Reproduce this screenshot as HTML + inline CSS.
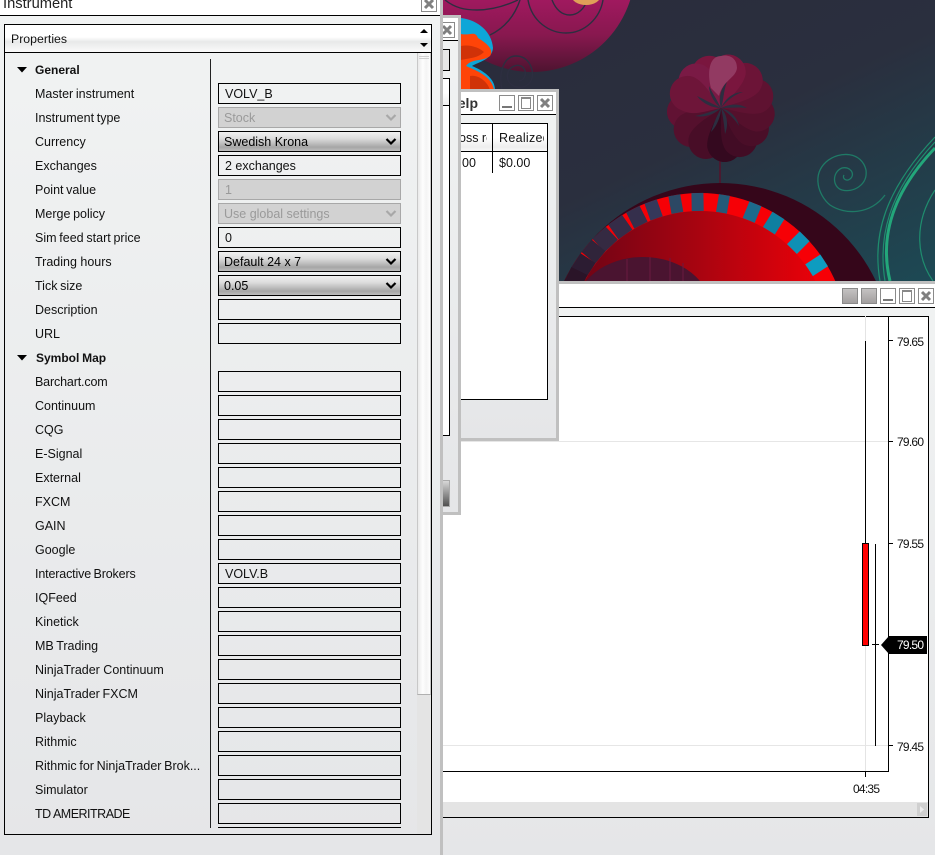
<!DOCTYPE html>
<html><head><meta charset="utf-8"><title>Instrument</title>
<style>
html,body{margin:0;padding:0;background:#2a2d3d}
body{width:935px;height:855px;position:relative;overflow:hidden;font-family:"Liberation Sans",sans-serif;font-size:12.5px;color:#111}
div{position:absolute;box-sizing:border-box}
.l{left:35px;height:16px;line-height:16px;white-space:nowrap;word-spacing:-.8px}
.h{font-weight:bold;font-size:12px;word-spacing:-.6px}
.i{left:218px;width:183px;height:21px;border:1px solid #000;padding-left:6px;padding-top:1px;line-height:19px;white-space:nowrap}
.d{border-color:#a8a8a8;background:#d2d2d2;color:#9a9a9a;padding-left:5px}
.s{background:linear-gradient(#f0f0f0 0,#dcdcdc 35%,#a6a6a6 80%,#bdbdbd 100%);color:#000;padding-left:5px}
.v{position:absolute;right:3px;top:5px;width:12px;height:9px}
.b{width:16px;height:16px;border:1px solid #8a8a8a;background:#fff}
.g{width:16px;height:16px;border:1px solid #8a8a8a;background:linear-gradient(#c4c2c2,#a29f9f)}
.t{left:897px;height:14px;line-height:14px;font-size:12px;letter-spacing:-.75px;color:#111}
.k{background:#000}
</style></head><body>

<svg style="position:absolute;left:0;top:0" width="935" height="855" viewBox="0 0 935 855">
<defs>
<linearGradient id="bg" x1="0.2" y1="0" x2="1" y2="1"><stop offset="0" stop-color="#2a2c3c"/><stop offset=".45" stop-color="#2a2f3e"/><stop offset="1" stop-color="#1c4a55"/></linearGradient>
<linearGradient id="mag" x1="0" y1="0" x2="0" y2="1"><stop offset="0" stop-color="#a3195f"/><stop offset=".65" stop-color="#a0195f"/><stop offset=".82" stop-color="#88184f"/><stop offset="1" stop-color="#4e1430"/></linearGradient>
<linearGradient id="red" x1="0" y1="0" x2="1" y2="0"><stop offset="0" stop-color="#6a0416"/><stop offset=".5" stop-color="#a90410"/><stop offset="1" stop-color="#f00008"/></linearGradient>
<path id="p" d="M0 0C-8 -12 -20 -22 -19 -37A18.500 18.500 0 0 1 18 -40C18 -26 6 -12 0 0Z"/>
</defs>
<rect x="440" y="0" width="495" height="290" fill="url(#bg)"/>
<circle cx="532" cy="-31" r="103" fill="url(#mag)"/>
<g fill="none" stroke="#2d2e40" stroke-width="1.4">
<path d="M445 0C455 8 465 10 477 10C490 10 505 6 518 0"/>
<path d="M490 35C505 28 515 15 520 0"/>
<path d="M528 0C532 22 550 33 566 33C585 33 600 18 603 0"/>
<path d="M552 0C556 10 562 15 570 15C578 15 585 8 587 0"/>
<path d="M502 90C498 70 505 56 516 56C528 56 534 68 532 78C529 90 512 90 508 80C505 70 514 63 521 66C528 70 526 80 519 81"/>
</g>
<ellipse cx="586" cy="-5" rx="15" ry="10" fill="#e0a058"/>
<!-- blob -->
<path d="M461 18C478 20 492 32 493 48C492 60 478 62 472 66C482 70 495 78 495 90H461Z" fill="#0da6d8"/>
<path d="M461 34C470 36 475 30 478 38C488 44 494 50 490 56C482 62 472 58 466 66C475 70 492 76 494 90H461Z" fill="#ff4408"/>
<path d="M461 46C470 44 480 48 484 52C478 58 470 58 461 60ZM470 76C478 74 488 82 490 90H470Z" fill="#d03208"/>
<!-- flower -->
<rect x="719" y="160" width="2" height="24" fill="#4a1a30"/>
<g transform="translate(721 108)">
<g transform="scale(.95)">
<use href="#p" fill="#611233" transform="rotate(-95)"/>
<use href="#p" fill="#55102d" transform="rotate(-125)"/>
<use href="#p" fill="#480d27" transform="rotate(-155)"/>
<use href="#p" fill="#34091f" transform="rotate(175)"/>
<use href="#p" fill="#420c25" transform="rotate(150)"/>
<use href="#p" fill="#4a0e28" transform="rotate(125)"/>
<use href="#p" fill="#55102c" transform="rotate(100)"/>
<use href="#p" fill="#5f1231" transform="rotate(72)"/>
<use href="#p" fill="#6c1437" transform="rotate(42)"/>
<use href="#p" fill="#7a163e" transform="rotate(12)"/>
<use href="#p" fill="#7a163e" transform="rotate(-18)"/>
<use href="#p" fill="#7a1a45" transform="rotate(-42)"/>
<use href="#p" fill="#6e1539" transform="rotate(-66)"/>
</g>
<path d="M-10 -20C-14 -35 -12 -52 0 -52C8 -54 16 -50 16 -40C15 -30 2 -28 -2 -12Z" fill="#923a62"/>
<g fill="#2c2e40">
<path d="M0 0C-3 -10 0 -20 6 -26C2 -16 3 -8 0 0Z"/><path d="M0 0C4 -9 12 -16 22 -16C12 -13 6 -7 0 0Z"/>
<path d="M0 0C8 -4 18 -5 26 0C16 -1 8 0 0 0Z"/><path d="M0 0C8 2 16 8 18 18C13 10 7 5 0 0Z"/>
<path d="M0 0C6 6 8 16 4 26C3 16 2 8 0 0Z"/><path d="M0 0C0 8 -4 18 -10 24C-7 14 -4 8 0 0Z"/>
<path d="M0 0C-6 6 -16 10 -26 8C-16 6 -8 3 0 0Z"/><path d="M0 0C-8 0 -18 -4 -24 -12C-14 -7 -8 -4 0 0Z"/>
<path d="M0 0C-6 -4 -12 -14 -12 -22C-8 -14 -4 -8 0 0Z"/>
</g>
</g>
<!-- dome -->
<circle cx="720" cy="356" r="173" fill="#35061a"/>
<circle cx="700" cy="341" r="148" fill="#f60006"/>
<g transform="translate(700 341)">
<rect x="-7" y="-148" width="14" height="18" fill="#0e9cc0" transform="rotate(57)"/>
<rect x="-7" y="-148" width="14" height="18" fill="#0e90b5" transform="rotate(45)"/>
<rect x="-7" y="-148" width="14" height="18" fill="#0f7fa0" transform="rotate(32)"/>
<rect x="-6.500" y="-148" width="13" height="18" fill="#1c6a8c" transform="rotate(22)"/>
<rect x="-5.500" y="-148" width="11" height="18" fill="#245a78" transform="rotate(9.500)"/>
<rect x="-6" y="-148" width="12" height="18" fill="#2a5070" transform="rotate(-1)"/>
<rect x="-6" y="-148" width="12" height="18" fill="#2c4864" transform="rotate(-10)"/>
<rect x="-6.500" y="-148" width="13" height="18" fill="#35385a" transform="rotate(-19.500)"/>
<rect x="-7.500" y="-148" width="15" height="18" fill="#352f4c" transform="rotate(-27)"/>
<rect x="-8.500" y="-148" width="17" height="18" fill="#352c48" transform="rotate(-35)"/>
<rect x="-9" y="-148" width="18" height="18" fill="#352a42" transform="rotate(-43)"/>
<rect x="-8" y="-148" width="16" height="18" fill="#30243a" transform="rotate(-50)"/>
<rect x="-8.500" y="-148" width="17" height="18" fill="#2c1c32" transform="rotate(-57)"/>
<rect x="-10" y="-148" width="20" height="18" fill="#2a1428" transform="rotate(-64)"/>
</g>
<circle cx="700" cy="341" r="130" fill="url(#red)"/>
<ellipse cx="643" cy="310" rx="68" ry="53" fill="#4a1430"/>
<path d="M627 259v22M650 257v24M670 258v23M683 263v18" stroke="#6a1a40" stroke-width="1"/>
<!-- green spirals -->
<g fill="none" stroke="#1f7a66" stroke-width="1.3">
<path d="M885 195C870 215 845 215 830 205C818 195 812 175 826 162C840 150 862 152 866 170C868 185 853 193 842 190C832 187 832 172 842 168C850 166 856 174 850 179C846 182 842 178 844 175"/>
</g>
<g fill="none" stroke="#23a67a" stroke-width="3"><path d="M890 281C880 240 890 195 935 148"/></g>
<g fill="none" stroke="#1f8d6e" stroke-width="1.200"><path d="M880 281C872 235 885 190 935 137"/><path d="M885 281C878 238 888 192 935 142"/><path d="M933 281C918 260 912 225 935 190"/></g>
</svg>

<!-- chart window -->
<div style="left:443px;top:281px;width:492px;height:574px;background:linear-gradient(#f1f3f3 0,#e5e6e8 100%)">
  <div style="left:116px;top:0;right:0;height:3px;background:#c0c0c0"></div>
  <div style="left:0;top:3px;right:0;height:23px;background:#fff"></div>
  <div class="k" style="left:0;top:26px;right:0;height:1px"></div>
  <div style="left:0;top:35px;width:486px;height:486px;background:#fff"></div>
  <div class="k" style="left:0;top:35px;width:486px;height:1px"></div>
  <div class="k" style="left:485px;top:35px;width:1px;height:501px"></div>
  <div class="k" style="left:445px;top:35px;width:1px;height:455px"></div>
  <div class="k" style="left:0;top:490px;width:446px;height:1px"></div>
  <div style="left:0;top:160px;width:445px;height:1px;background:#e6e6e6"></div>
  <div style="left:0;top:464px;width:445px;height:1px;background:#e6e6e6"></div>
  <div style="left:422px;top:35px;width:1px;height:455px;background:#e4e4e4"></div>
  <div style="left:0;top:521px;width:485px;height:15px;background:#e4e4e4"></div>
  <div class="k" style="left:0;top:536px;width:486px;height:1px"></div>
  <div style="left:474px;top:522px;width:10px;height:13px;background:#d0d0d0"><svg width="10" height="13" style="display:block"><path d="M3 3l4 3.500-4 3.500z" fill="#eee"/></svg></div>
</div>
<div class="k" style="left:865px;top:341px;width:1px;height:202px"></div>
<div class="k" style="left:862px;top:543px;width:7px;height:103px"></div>
<div style="left:863px;top:544px;width:5px;height:101px;background:#f00"></div>
<div class="k" style="left:875px;top:544px;width:1px;height:202px"></div>
<div class="k" style="left:872px;top:644px;width:7px;height:1px"></div>
<div class="k" style="left:888px;top:340px;width:5px;height:1px"></div>
<div class="k" style="left:888px;top:441px;width:5px;height:1px"></div>
<div class="k" style="left:888px;top:543px;width:5px;height:1px"></div>
<div class="k" style="left:888px;top:745px;width:5px;height:1px"></div>
<div class="k" style="left:865px;top:771px;width:1px;height:6px"></div>
<div class="t" style="top:335px">79.65</div>
<div class="t" style="top:435px">79.60</div>
<div class="t" style="top:537px">79.55</div>
<div class="t" style="top:740px">79.45</div>
<svg style="position:absolute;left:881px;top:636px" width="46" height="18"><path d="M0 9L8 0H46V18H8Z" fill="#000"/></svg>
<div class="t" style="top:638px;color:#fff">79.50</div>
<div class="t" style="left:853px;top:782px">04:35</div>
<div class="g" style="left:842px;top:288px"></div>
<div class="g" style="left:861px;top:288px"></div>
<div class="b" style="left:880px;top:288px"><div style="left:2px;top:10px;width:10px;height:2px;background:#777"></div></div>
<div class="b" style="left:899px;top:288px"><div style="left:2px;top:1px;width:10px;height:12px;border:1px solid #888;border-top-width:2px"></div></div>
<div class="b" style="left:918px;top:288px"><svg width="14" height="14" style="display:block"><path d="M3 3l8 8M11 3l-8 8" stroke="#808080" stroke-width="3"/></svg></div>

<!-- window 3 -->
<div style="left:461px;top:89px;width:98px;height:352px;background:linear-gradient(#f1f3f3,#e5e6e8);border:3px solid #c0c0c0;border-left:0">
  <div style="left:0;top:0;right:0;height:22px;background:#fff"></div>
  <div class="k" style="left:0;top:22px;right:0;height:1px"></div>
  <div style="left:0;top:31px;width:87px;height:277px;background:#fff;border:1px solid #000;border-left:0"></div>
  <div style="left:0;top:32px;width:86px;height:27px;background:linear-gradient(#fff 0,#fff 50%,#eee 85%,#f8f8f8 100%)"></div>
  <div class="k" style="left:0;top:59px;width:86px;height:1px"></div>
  <div class="k" style="left:31px;top:31px;width:1px;height:50px"></div>
  <div style="left:0;top:3px;height:16px;line-height:16px;font-weight:bold;font-size:14px;color:#333;width:17px;overflow:hidden;direction:rtl">elp</div>
  <div style="left:38px;top:38px;height:16px;line-height:16px;white-space:nowrap;width:45px;overflow:hidden;letter-spacing:.3px">Realized</div>
  <div style="left:0;top:38px;height:16px;line-height:16px;white-space:nowrap;width:26px;overflow:hidden;text-indent:-2px">oss re</div>
  <div style="left:1px;top:63px;height:16px;line-height:16px">00</div>
  <div style="left:38px;top:63px;height:16px;line-height:16px">$0.00</div>
</div>
<div class="b" style="left:499px;top:95px"><div style="left:2px;top:10px;width:10px;height:2px;background:#777"></div></div>
<div class="b" style="left:518px;top:95px"><div style="left:2px;top:1px;width:10px;height:12px;border:1px solid #888;border-top-width:2px"></div></div>
<div class="b" style="left:537px;top:95px"><svg width="14" height="14" style="display:block"><path d="M3 3l8 8M11 3l-8 8" stroke="#808080" stroke-width="3"/></svg></div>

<!-- window 2 -->
<div style="left:443px;top:15px;width:18px;height:500px;background:linear-gradient(#f1f3f3,#e5e6e8);border:3px solid #c0c0c0;border-left:0;border-bottom-width:3px">
  <div style="left:0;top:0;right:0;height:22px;background:#fff"></div>
  <div class="k" style="left:0;top:22px;width:15px;height:1px"></div>
  <div style="left:0;top:31px;width:7px;height:22px;border:1px solid #000;border-left:0;background:#e6e7e7"></div>
  <div style="left:0;top:60px;width:7px;height:358px;border:1px solid #000;border-left:0;background:#fff"></div>
  <div style="left:0;top:61px;width:6px;height:27px;background:linear-gradient(#fff 50%,#eee 100%)"></div>
  <div class="k" style="left:0;top:87px;width:6px;height:1px"></div>
  <div style="left:0;top:462px;width:7px;height:27px;background:linear-gradient(#d8d8d8,#505050);border:1px solid #aaa;border-left:0"></div>
</div>
<div class="b" style="left:439px;top:22px;height:16px"><svg width="14" height="14" style="display:block"><path d="M3 3l8 8M11 3l-8 8" stroke="#808080" stroke-width="3"/></svg></div>

<!-- instrument window -->
<div style="left:0;top:0;width:443px;height:855px;background:linear-gradient(#f1f3f3,#e5e6e8);border-right:3px solid #c0c0c0">
  <div style="left:0;top:0;width:440px;height:15px;background:#fff"></div>
  <div class="k" style="left:0;top:15px;width:440px;height:1px"></div>
  <div style="left:3px;top:-4px;font-size:14.700px;line-height:16px;color:#222">Instrument</div>
  <div class="b" style="left:421px;top:-4px"><svg width="14" height="14" style="display:block"><path d="M3 3l8 8M11 3l-8 8" stroke="#808080" stroke-width="3"/></svg></div>
  <div style="left:4px;top:24px;width:428px;height:811px;border:1px solid #000"></div>
  <div style="left:5px;top:25px;width:426px;height:27px;background:linear-gradient(#fff 0,#fff 45%,#e8e9e9 62%,#fafafa 100%)"></div>
  <div class="k" style="left:5px;top:52px;width:426px;height:1px"></div>
  <div style="left:11px;top:31px;height:16px;line-height:16px;font-size:12.300px">Properties</div>
  <svg style="position:absolute;left:418px;top:27px" width="12" height="24"><path d="M2 6L6 2 10 6z" fill="#000"/><path d="M2 16h8L6 20z" fill="#000"/></svg>
  <div style="left:417px;top:53px;width:14px;height:781px;background:#e4e4e4"></div>
  <div style="left:417px;top:53px;width:14px;height:642px;background:linear-gradient(90deg,#eaeaea,#fdfdfd 40%,#f4f4f4 70%,#fdfdfd);border:1px solid #b0b0b0;border-top:0;border-left-color:#c8c8c8;border-right-color:#c8c8c8"></div>
  <div style="left:419px;top:56px;width:10px;height:1px;background:#d0d0d0"></div>
  <div style="left:419px;top:58px;width:10px;height:1px;background:#d0d0d0"></div>
  <div style="left:210px;top:59px;width:1px;height:769px;background:#222"></div>
  <svg style="position:absolute;left:17px;top:67px" width="11" height="7"><path d="M0 0h10L5 5.500z" fill="#000"/></svg>
  <svg style="position:absolute;left:17px;top:355px" width="11" height="7"><path d="M0 0h10L5 5.500z" fill="#000"/></svg>
  <div class="l h" style="top:62px">General</div>
  <div class="l h" style="top:350px;left:36px">Symbol Map</div>

  <div class="l" style="top:86px">Master instrument</div><div class="i" style="top:83px">VOLV_B</div>
  <div class="l" style="top:110px">Instrument type</div><div class="i d" style="top:107px">Stock<svg class="v" viewBox="0 0 12 9"><path d="M1.500 2L6 6.500 10.500 2" fill="none" stroke="#a8a8a8" stroke-width="2.200"/></svg></div>
  <div class="l" style="top:134px">Currency</div><div class="i s" style="top:131px">Swedish Krona<svg class="v" viewBox="0 0 12 9"><path d="M1.500 2L6 6.500 10.500 2" fill="none" stroke="#000" stroke-width="2.200"/></svg></div>
  <div class="l" style="top:158px">Exchanges</div><div class="i" style="top:155px">2 exchanges</div>
  <div class="l" style="top:182px">Point value</div><div class="i d" style="top:179px;padding-left:6px">1</div>
  <div class="l" style="top:206px">Merge policy</div><div class="i d" style="top:203px">Use global settings<svg class="v" viewBox="0 0 12 9"><path d="M1.500 2L6 6.500 10.500 2" fill="none" stroke="#a8a8a8" stroke-width="2.200"/></svg></div>
  <div class="l" style="top:230px;word-spacing:-.7px">Sim feed start price</div><div class="i" style="top:227px">0</div>
  <div class="l" style="top:254px;word-spacing:0">Trading hours</div><div class="i s" style="top:251px">Default 24 x 7<svg class="v" viewBox="0 0 12 9"><path d="M1.500 2L6 6.500 10.500 2" fill="none" stroke="#000" stroke-width="2.200"/></svg></div>
  <div class="l" style="top:278px">Tick size</div><div class="i s" style="top:275px">0.05<svg class="v" viewBox="0 0 12 9"><path d="M1.500 2L6 6.500 10.500 2" fill="none" stroke="#000" stroke-width="2.200"/></svg></div>
  <div class="l" style="top:302px">Description</div><div class="i" style="top:299px"></div>
  <div class="l" style="top:326px">URL</div><div class="i" style="top:323px"></div>

  <div class="l" style="top:374px;letter-spacing:-.15px">Barchart.com</div><div class="i" style="top:371px"></div>
  <div class="l" style="top:398px">Continuum</div><div class="i" style="top:395px"></div>
  <div class="l" style="top:422px">CQG</div><div class="i" style="top:419px"></div>
  <div class="l" style="top:446px">E-Signal</div><div class="i" style="top:443px"></div>
  <div class="l" style="top:470px">External</div><div class="i" style="top:467px"></div>
  <div class="l" style="top:494px">FXCM</div><div class="i" style="top:491px"></div>
  <div class="l" style="top:518px">GAIN</div><div class="i" style="top:515px"></div>
  <div class="l" style="top:542px">Google</div><div class="i" style="top:539px"></div>
  <div class="l" style="top:566px;letter-spacing:-.15px">Interactive Brokers</div><div class="i" style="top:563px">VOLV.B</div>
  <div class="l" style="top:590px">IQFeed</div><div class="i" style="top:587px"></div>
  <div class="l" style="top:614px">Kinetick</div><div class="i" style="top:611px"></div>
  <div class="l" style="top:638px">MB Trading</div><div class="i" style="top:635px"></div>
  <div class="l" style="top:662px;word-spacing:0">NinjaTrader Continuum</div><div class="i" style="top:659px"></div>
  <div class="l" style="top:686px">NinjaTrader FXCM</div><div class="i" style="top:683px"></div>
  <div class="l" style="top:710px">Playback</div><div class="i" style="top:707px"></div>
  <div class="l" style="top:734px">Rithmic</div><div class="i" style="top:731px"></div>
  <div class="l" style="top:758px">Rithmic for NinjaTrader Brok...</div><div class="i" style="top:755px"></div>
  <div class="l" style="top:782px">Simulator</div><div class="i" style="top:779px"></div>
  <div class="l" style="top:806px;letter-spacing:-.5px;word-spacing:0">TD AMERITRADE</div><div class="i" style="top:803px"></div>
  <div class="k" style="left:218px;top:827px;width:183px;height:1px"></div>
</div>
</body></html>
